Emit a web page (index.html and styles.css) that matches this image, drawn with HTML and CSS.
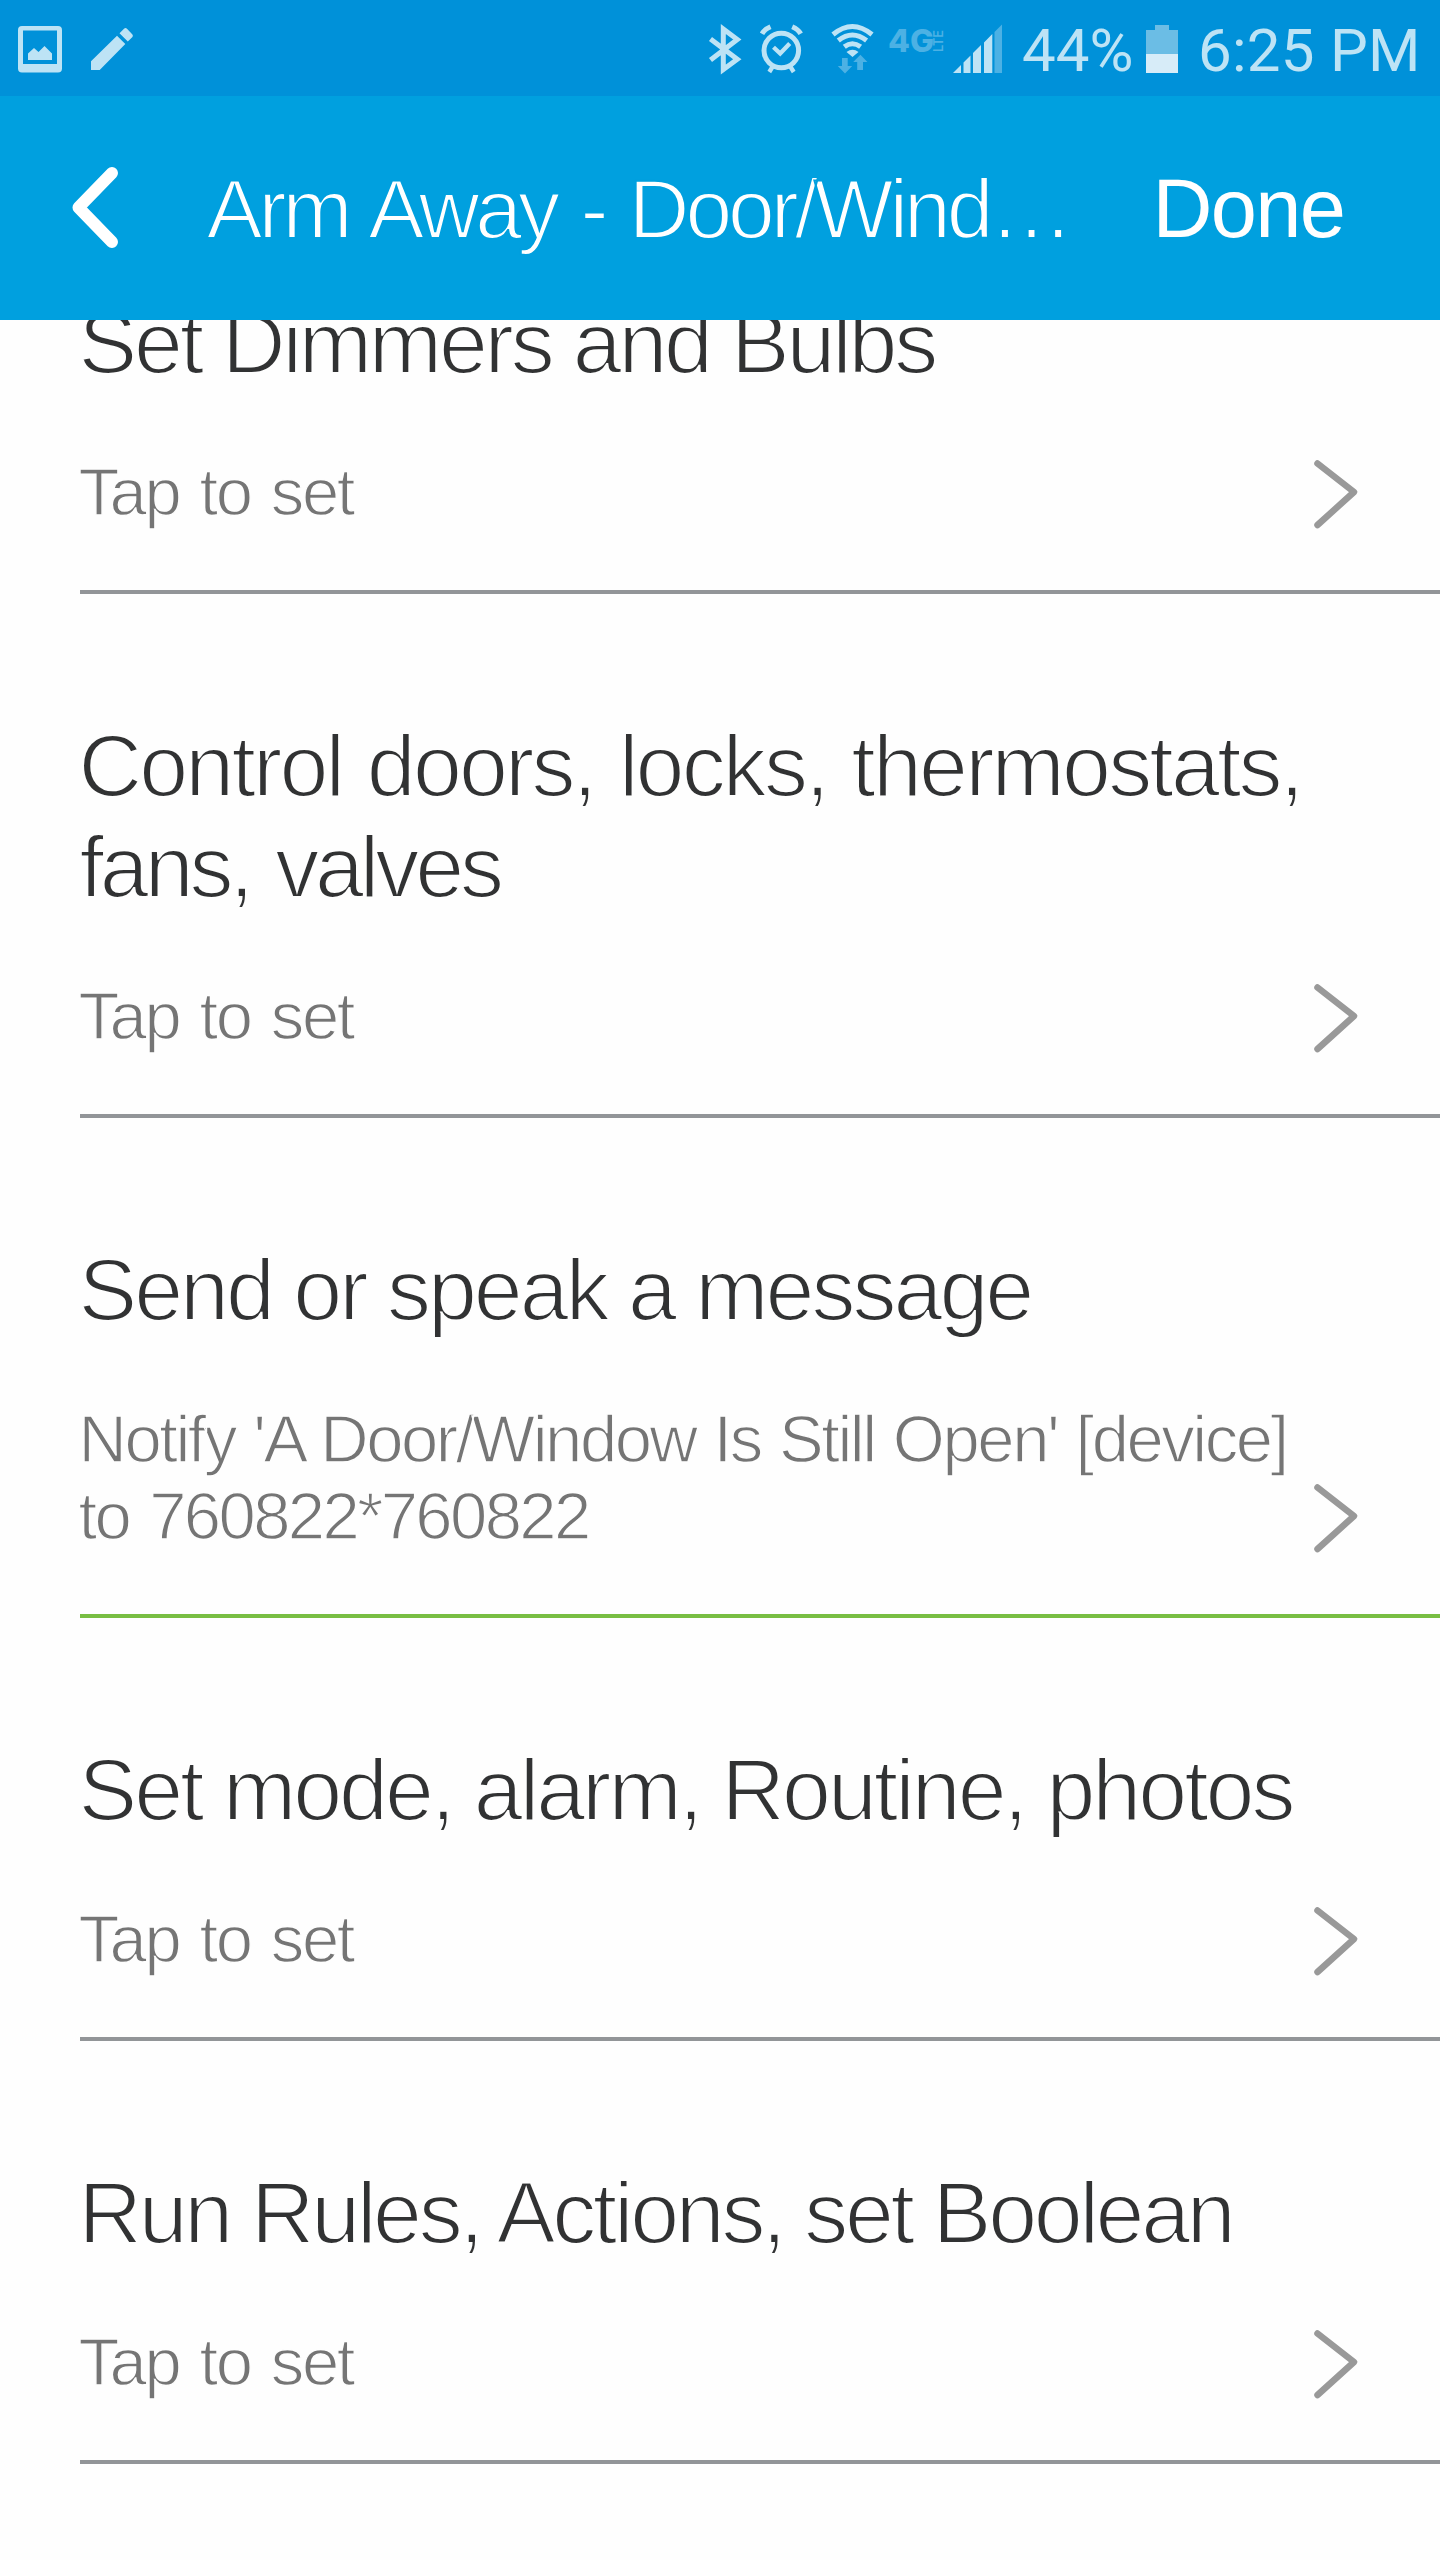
FILE: index.html
```html
<!DOCTYPE html>
<html lang="en">
<head>
<meta charset="utf-8">
<title>Arm Away - Door/Window</title>
<link rel="stylesheet" href="styles.css">
</head>
<body>
<div class="statusbar">
  <svg class="icon-picture" width="44" height="47" viewBox="0 0 44 47"><path fill-rule="evenodd" d="M4 0h36a4 4 0 0 1 4 4v38.500a4 4 0 0 1-4 4H4a4 4 0 0 1-4-4V4a4 4 0 0 1 4-4zM5 4.500V38h34V4.500z"/><path d="M10 34v-6.500l6-5.500 4.500 4 6-6 7.500 7.500V34z"/></svg>
  <svg class="icon-pencil" width="42" height="42" viewBox="0 0 42 42"><path d="M0 42v-8.700L26 7.700l8.300 8.300L8.700 42zM28.500 5.300 33 .8q1.500-1.400 3 0l5.200 5.400q1.300 1.500 0 3L36.800 13.500z"/></svg>
  <div class="spacer"></div>
  <svg class="tray" width="294" height="96" viewBox="708 0 294 96">
    <path class="line" stroke-width="5" d="M710.500 39 737.300 59.200 723.300 69.500V29L737.300 39.500 710.500 60"/>
    <circle class="line" stroke-width="5" cx="781.300" cy="50.500" r="17.300"/>
    <path class="line" stroke-width="4.300" d="m773.500 47.200 6.700 6.300 9.500-10M773 66l-3.700 6M790 66l3.700 6"/>
    <path class="line" stroke-width="5" d="M762 33.800q2.500-4.500 8.500-7M800.700 33.800q-2.500-4.500-8.500-7"/>
    <path class="line" stroke-width="5" d="M833 34.500q19.300-16 39 0M838.300 40.500q14-11 28.300 0M844.300 46.700q8-6 16.300 0"/>
    <path d="m852.500 57-6-5q6-4.500 12 0z"/>
    <path class="dim" d="M842 58h5.700v8h4.500l-7.200 7.500-7.200-7.500h4.200zM857.200 70v-8h-4l7.200-7.200 7 7.200H863v8z"/>
    <text class="net dim" x="888" y="52" textLength="46" lengthAdjust="spacingAndGlyphs">4G</text>
    <text class="lte dim" transform="translate(942.500 52) rotate(-90)" textLength="22" lengthAdjust="spacingAndGlyphs">LTE</text>
    <path d="m953 73 8-8v8zM963.500 73V62.500l7-7V73zM973 73V53l8-8v28zM984 73V42.500l8.300-8.500v39z"/>
    <path class="dim" d="M994.500 73V32l7.500-7.500V73z"/>
  </svg>
  <span class="percent">44%</span>
  <svg class="battery" width="32" height="48" viewBox="0 0 32 48"><path fill="#6bbde5" d="M0 5h9V0h14v5h9v24H0z"/><path fill="#d7ecf8" d="M0 29h32v19H0z"/></svg>
  <span class="clock">6:25 PM</span>
</div>
<header class="appbar">
  <svg class="back" width="46" height="81" viewBox="0 0 46 81"><path d="M40 6 6.500 40.500 40 75"/></svg>
  <h1 class="title">Arm Away - Door/Wind…</h1>
  <span class="done">Done</span>
</header>
<main class="viewport">
  <section class="row first">
    <h2 class="name dimmers">Set Dimmers and Bulbs</h2>
    <div class="setting"><p class="value">Tap to set</p><svg class="chevron" width="44" height="69" viewBox="0 0 44 69"><path d="M3.500 3.500 40 32 3.500 65"/></svg></div>
  </section>
  <section class="row">
    <h2 class="name control">Control doors, locks, thermostats,<br><span class="fans">fans, valves</span></h2>
    <div class="setting"><p class="value">Tap to set</p><svg class="chevron" width="44" height="69" viewBox="0 0 44 69"><path d="M3.500 3.500 40 32 3.500 65"/></svg></div>
  </section>
  <section class="row active">
    <h2 class="name message">Send or speak a message</h2>
    <div class="setting"><p class="value notify">Notify 'A Door/Window Is Still Open' [device]<br><span class="code">to 760822*760822</span></p><svg class="chevron" width="44" height="69" viewBox="0 0 44 69"><path d="M3.500 3.500 40 32 3.500 65"/></svg></div>
  </section>
  <section class="row">
    <h2 class="name mode">Set mode, alarm, Routine, photos</h2>
    <div class="setting"><p class="value">Tap to set</p><svg class="chevron" width="44" height="69" viewBox="0 0 44 69"><path d="M3.500 3.500 40 32 3.500 65"/></svg></div>
  </section>
  <section class="row">
    <h2 class="name rules">Run Rules, Actions, set Boolean</h2>
    <div class="setting"><p class="value">Tap to set</p><svg class="chevron" width="44" height="69" viewBox="0 0 44 69"><path d="M3.500 3.500 40 32 3.500 65"/></svg></div>
  </section>
</main>
</body>
</html>
```
FILE: styles.css
```css
* { box-sizing: border-box; }

body {
  margin: 0;
  width: 1440px;
  height: 2560px;
  display: flex;
  flex-direction: column;
  overflow: hidden;
  background: #fefefe;
  font-family: "Liberation Sans", Arial, sans-serif;
}

h1, h2, p { margin: 0; font-weight: 400; }
svg { display: block; flex: none; }

/* System status bar */
.statusbar {
  flex: none;
  height: 96px;
  display: flex;
  padding-left: 18px;
  background: #0091d9;
  color: #bde3f5;
  fill: #bde3f5;
  font: 60px/96px Roboto, sans-serif;
  white-space: nowrap;
}
.icon-picture { margin-top: 26px; }
.icon-pencil { margin: 28px 0 0 29px; }
.spacer { flex: 1; }
.line { fill: none; stroke: #bde3f5; }
.dim { fill: #4cb1e4; }
.net { font: 800 31px Inter, sans-serif; }
.lte { font: 600 13px Inter, sans-serif; }
.percent { width: 124px; padding-top: 3px; margin-left: 20px; }
.battery { margin-top: 25px; }
.clock { width: 262px; padding: 3px 0 0 20px; letter-spacing: 0.26px; }

/* App header */
.appbar {
  flex: none;
  height: 224px;
  display: flex;
  padding-left: 72px;
  background: #00a0df;
  color: #fff;
  line-height: 226px;
  white-space: nowrap;
}
.back { margin-top: 71px; fill: none; stroke: #fff; stroke-width: 12; stroke-linecap: round; stroke-linejoin: round; }
/* An outline in the background colour slims the letters to a light weight. */
.title { width: 946px; padding-left: 88.5px; font-size: 84px; letter-spacing: -4px; word-spacing: 5px; -webkit-text-stroke: 2px #00a0df; }
.done { padding-left: 88.5px; font-size: 83px; letter-spacing: -1.7px; }

/* Settings list, scrolled part of the way under the header */
.viewport { flex: 1; overflow: hidden; }
.row {
  margin-left: 80px;
  padding: 121px 82px 60px 0;
  border-bottom: 4px solid #929598;
}
.first { margin-top: -149px; }
.active { border-bottom-color: #78be43; }
.name {
  margin: 0 0 60px -1.5px;
  color: #313233;
  font-size: 88px;
  line-height: 101px;
  white-space: nowrap;
  -webkit-text-stroke: 2.1px #fefefe;
}
.dimmers { letter-spacing: -3.23px; }
.control { letter-spacing: -2.85px; word-spacing: 3px; }
.fans { letter-spacing: -4.1px; word-spacing: 5px; margin-left: 1px; }
.message { letter-spacing: -3.03px; }
.mode { letter-spacing: -3.03px; }
.rules { letter-spacing: -3.33px; }
.setting { display: flex; align-items: flex-end; justify-content: space-between; }
.value {
  margin-left: -1.5px;
  color: #757575;
  font-size: 67px;
  line-height: 77px;
  letter-spacing: -2.4px;
  word-spacing: 4px;
  white-space: nowrap;
  -webkit-text-stroke: 1.4px #fefefe;
}
.notify { width: 1200px; letter-spacing: -2.45px; word-spacing: 2px; }
.code { letter-spacing: -2.6px; word-spacing: 4px; }
.chevron { margin-bottom: 1px; fill: none; stroke: #999; stroke-width: 6.5; stroke-linecap: round; stroke-linejoin: round; }
```
